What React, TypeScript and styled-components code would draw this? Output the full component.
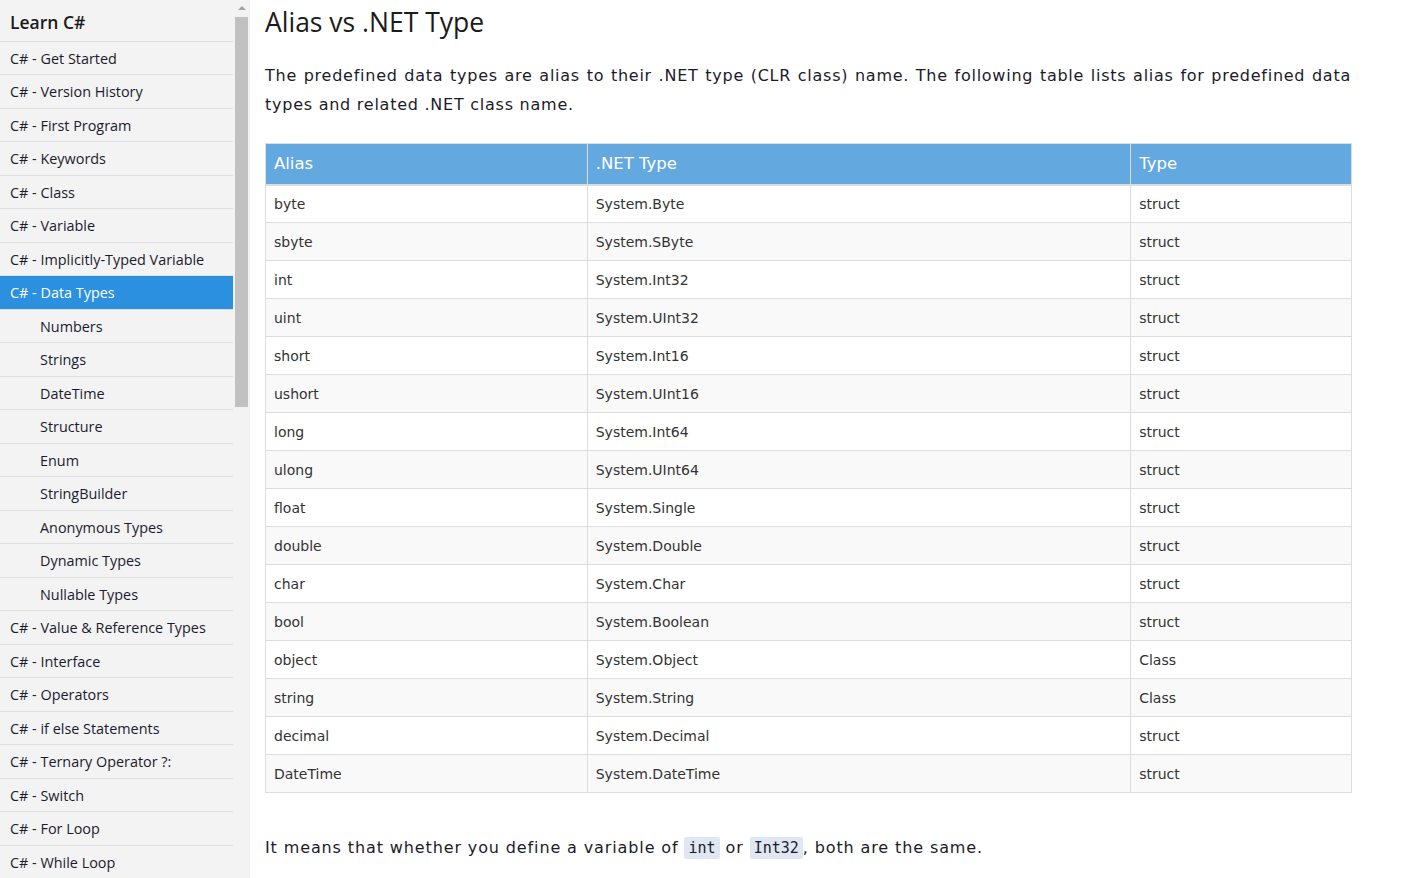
import React from "react";
import styled, { createGlobalStyle } from "styled-components";

const Global = createGlobalStyle`
  html, body { margin: 0; padding: 0; background: #fff; }
  body { font-family: "DejaVu Sans", Verdana, sans-serif; color: #212529; overflow: hidden; }
  * { box-sizing: border-box; }
`;

const Page = styled.div`
  display: flex;
  height: 878px;
  overflow: hidden;
`;

const Sidebar = styled.nav`
  width: 250px;
  flex: 0 0 250px;
  height: 878px;
  display: flex;
  background: #f3f3f3;
  font-family: "Open Sans", "Noto Sans", sans-serif;
  overflow: hidden;
`;

const SideList = styled.ul`
  list-style: none;
  margin: 0;
  padding: 0;
  width: 233px;
  flex: 0 0 233px;
`;

const ScrollTrack = styled.div`
  flex: 1;
  display: flex;
  flex-direction: column;
  align-items: center;
  padding: 0 2px;
`;

const ScrollArrow = styled.div`
  width: 0;
  height: 0;
  margin: 6px 0 6px;
  border-left: 4px solid transparent;
  border-right: 4px solid transparent;
  border-bottom: 4px solid #a3a3a3;
`;

const ScrollThumb = styled.div`
  width: 13px;
  height: 390px;
  margin-top: 1px;
  background: #c1c1c1;
`;

const SideHead = styled.li`
  height: 41.5px;
  display: flex;
  align-items: center;
  padding: 3px 10px 0;
  font-size: 17.5px;
  font-weight: 600;
  color: #1a1a1a;
  border-bottom: 1px solid #dedede;
`;

const SideItem = styled.li<{ $active?: boolean; $sub?: boolean }>`
  height: 33.5px;
  display: flex;
  align-items: center;
  padding-top: 1px;
  padding-left: ${(p) => (p.$sub ? "40px" : "10px")};
  font-size: 14.4px;
  color: ${(p) => (p.$active ? "#fff" : "#1b1b2f")};
  background: ${(p) => (p.$active ? "#2a90df" : "transparent")};
  border-bottom: 1px solid #e0e0e0;
  white-space: nowrap;
`;

const Main = styled.main`
  flex: 1;
  padding: 0 71px 0 15px;
  overflow: hidden;
`;

const Title = styled.h1`
  margin: 0;
  padding-top: 3px;
  font-family: "Open Sans", "Noto Sans", sans-serif;
  font-weight: 400;
  font-size: 26.5px;
  line-height: 38px;
  color: #1b1b1b;
`;

const Para = styled.p`
  margin: 20px 0 0;
  width: 1086px;
  font-size: 16px;
  line-height: 29px;
  text-align: justify;
  color: #1b1b2a;
  letter-spacing: 0.75px;
`;

const Table = styled.table`
  width: 1087px;
  border-collapse: collapse;
  margin-top: 24px;
  font-size: 14px;
`;

const Th = styled.th<{ $w: number }>`
  width: ${(p) => p.$w}px;
  text-align: left;
  font-weight: 400;
  font-size: 16.5px;
  color: #fff;
  background: #63a8df;
  height: 41px;
  padding: 0 8px;
  border: 1px solid #dddddd;
  border-bottom: 2px solid #dddddd;
`;

const Tr = styled.tr<{ $odd: boolean }>`
  background: ${(p) => (p.$odd ? "#f9f9f9" : "#fff")};
`;

const Td = styled.td`
  height: 38px;
  padding: 0 8px;
  border: 1px solid #dddddd;
  color: #333;
`;

const Closing = styled.p`
  margin: 40px 0 0;
  font-size: 16px;
  line-height: 29px;
  color: #1b1b2a;
  letter-spacing: 0.88px;
`;

const Code = styled.code`
  font-family: "DejaVu Sans Mono", "Liberation Mono", monospace;
  font-size: 15px;
  background: #dfe7f2;
  padding: 2px 4px;
  border-radius: 2px;
  letter-spacing: 0;
`;

const mainItems: { t: string; active?: boolean; sub?: boolean }[] = [
  { t: "C# - Get Started" },
  { t: "C# - Version History" },
  { t: "C# - First Program" },
  { t: "C# - Keywords" },
  { t: "C# - Class" },
  { t: "C# - Variable" },
  { t: "C# - Implicitly-Typed Variable" },
  { t: "C# - Data Types", active: true },
  { t: "Numbers", sub: true },
  { t: "Strings", sub: true },
  { t: "DateTime", sub: true },
  { t: "Structure", sub: true },
  { t: "Enum", sub: true },
  { t: "StringBuilder", sub: true },
  { t: "Anonymous Types", sub: true },
  { t: "Dynamic Types", sub: true },
  { t: "Nullable Types", sub: true },
  { t: "C# - Value & Reference Types" },
  { t: "C# - Interface" },
  { t: "C# - Operators" },
  { t: "C# - if else Statements" },
  { t: "C# - Ternary Operator ?:" },
  { t: "C# - Switch" },
  { t: "C# - For Loop" },
  { t: "C# - While Loop" },
];

const rows: [string, string, string][] = [
  ["byte", "System.Byte", "struct"],
  ["sbyte", "System.SByte", "struct"],
  ["int", "System.Int32", "struct"],
  ["uint", "System.UInt32", "struct"],
  ["short", "System.Int16", "struct"],
  ["ushort", "System.UInt16", "struct"],
  ["long", "System.Int64", "struct"],
  ["ulong", "System.UInt64", "struct"],
  ["float", "System.Single", "struct"],
  ["double", "System.Double", "struct"],
  ["char", "System.Char", "struct"],
  ["bool", "System.Boolean", "struct"],
  ["object", "System.Object", "Class"],
  ["string", "System.String", "Class"],
  ["decimal", "System.Decimal", "struct"],
  ["DateTime", "System.DateTime", "struct"],
];

export default function App() {
  return (
    <>
      <Global />
      <Page>
        <Sidebar>
          <SideList>
            <SideHead>Learn C#</SideHead>
            {mainItems.map((it) => (
              <SideItem key={it.t} $active={it.active} $sub={it.sub}>
                {it.t}
              </SideItem>
            ))}
          </SideList>
          <ScrollTrack>
            <ScrollArrow />
            <ScrollThumb />
          </ScrollTrack>
        </Sidebar>
        <Main>
          <Title>Alias vs .NET Type</Title>
          <Para>
            The predefined data types are alias to their .NET type (CLR class) name. The
            following table lists alias for predefined data types and related .NET class name.
          </Para>
          <Table>
            <thead>
              <tr>
                <Th $w={322}>Alias</Th>
                <Th $w={544}>.NET Type</Th>
                <Th $w={221}>Type</Th>
              </tr>
            </thead>
            <tbody>
              {rows.map((r, i) => (
                <Tr key={r[0]} $odd={i % 2 === 1}>
                  <Td>{r[0]}</Td>
                  <Td>{r[1]}</Td>
                  <Td>{r[2]}</Td>
                </Tr>
              ))}
            </tbody>
          </Table>
          <Closing>
            It means that whether you define a variable of <Code>int</Code> or{" "}
            <Code>Int32</Code>, both are the same.
          </Closing>
        </Main>
      </Page>
    </>
  );
}
